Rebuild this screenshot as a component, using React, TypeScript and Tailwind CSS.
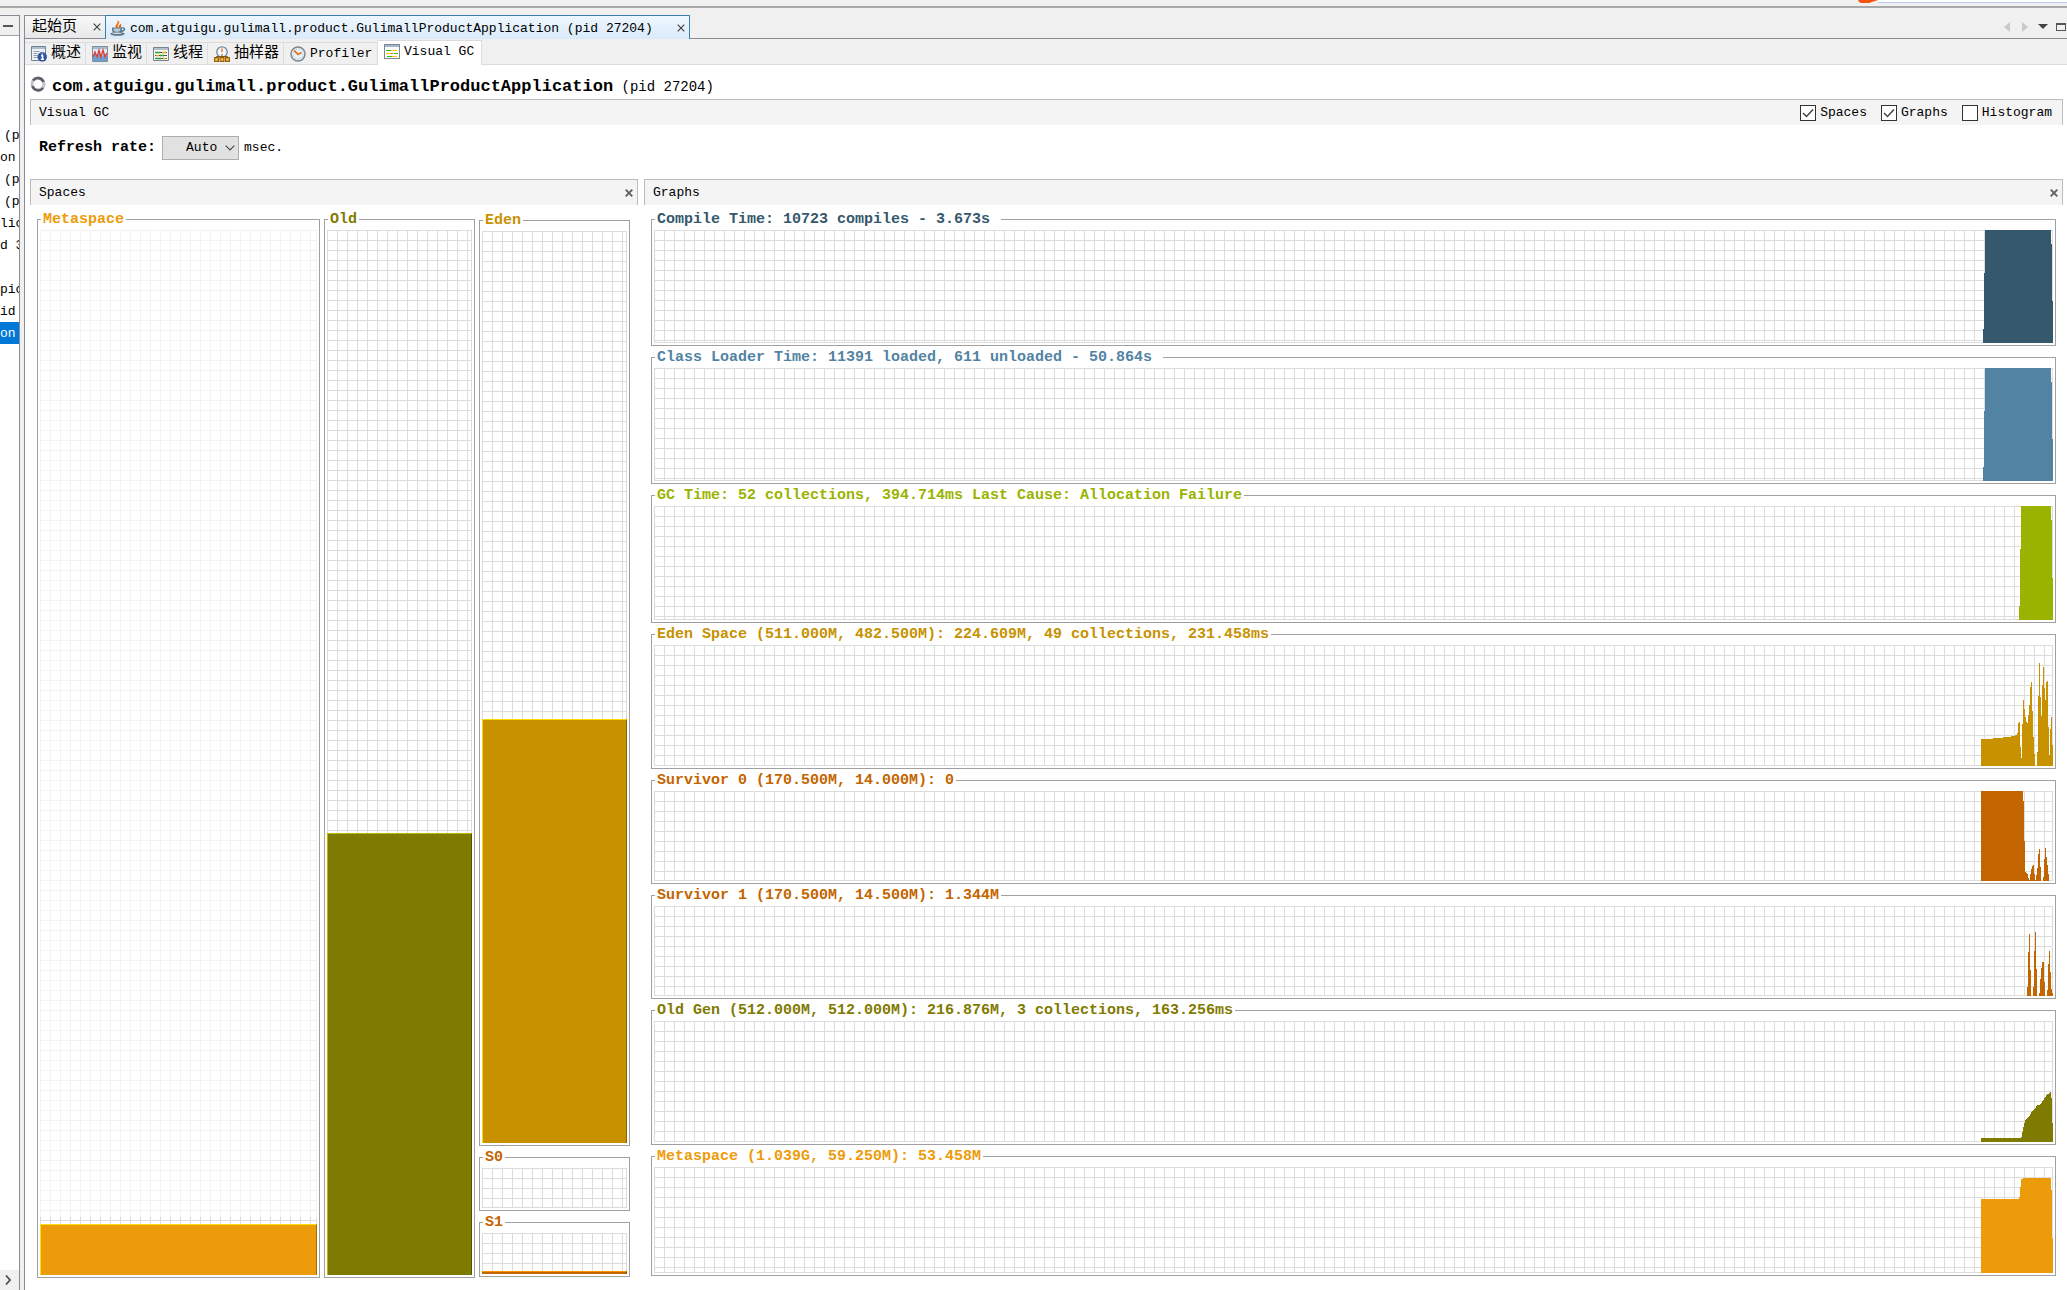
import React from "react";

type Run = [number, number];

const GRID =
  "bg-[linear-gradient(to_right,#dcdcdc_1px,transparent_1px),linear-gradient(to_bottom,#dcdcdc_1px,transparent_1px)] bg-[size:10px_10px] border-r border-b border-[#dcdcdc]";
const LIGHT_GRID =
  "bg-[linear-gradient(to_right,#f2f2f2_1px,transparent_1px),linear-gradient(to_bottom,#f2f2f2_1px,transparent_1px)] bg-[size:10px_10px] border-r border-[#f2f2f2]";

const CHART_WIDTH = 72;

function toPath(runs: Run[], height: number) {
  return runs
    .map(([x, h], i) => {
      const end = i + 1 < runs.length ? runs[i + 1][0] : CHART_WIDTH;
      return h > 0 ? `M${x} ${height}V${height - h}H${end}V${height}Z` : "";
    })
    .join("");
}

const columns = (start: number, heights: number[]): Run[] => heights.map((h, i) => [start + i, h]);

const loadRuns: Run[] = [[2, 14], [3, 70], [4, 113], [70, 99], [71, 42]];

const graphs: { title: string; color: string; height: number; runs: Run[] }[] = [
  { title: "Compile Time: 10723 compiles - 3.673s ", color: "text-[#35586c]", height: 113, runs: loadRuns },
  { title: "Class Loader Time: 11391 loaded, 611 unloaded - 50.864s ", color: "text-[#5283a2]", height: 113, runs: loadRuns },
  {
    title: "GC Time: 52 collections, 394.714ms Last Cause: Allocation Failure",
    color: "text-[#9ab300]", height: 113,
    runs: [[38, 14], [39, 70], [40, 113], [70, 99], [71, 42]],
  },
  {
    title: "Eden Space (511.000M, 482.500M): 224.609M, 49 collections, 231.458ms",
    color: "text-[#c79100]", height: 121,
    runs: [
      [0, 27], [12, 28], [22, 29], [30, 30], [34, 31],
      ...columns(36, [33, 43, 44, 19, 8, 42, 66, 57, 49, 44, 43, 51, 61, 79, 84, 55, 29, 12, 0, 0, 14, 70, 103, 69, 50, 81, 99, 78, 66, 84, 85, 39, 11, 37, 49, 21]),
    ],
  },
  {
    title: "Survivor 0 (170.500M, 14.000M): 0",
    color: "text-[#c36500]", height: 90,
    runs: [[0, 90], ...columns(42, [80, 40, 9, 8, 7, 3, 1, 7, 12, 15, 16, 7, 1, 6, 13, 27, 32, 14, 0, 0, 4, 22, 33, 24, 16, 7, 0])],
  },
  {
    title: "Survivor 1 (170.500M, 14.500M): 1.344M",
    color: "text-[#c36500]", height: 90,
    runs: columns(46, [9, 44, 62, 26, 0, 0, 9, 45, 64, 27, 0, 0, 3, 17, 28, 34, 34, 14, 0, 0, 6, 32, 45, 24, 7, 3]),
  },
  {
    title: "Old Gen (512.000M, 512.000M): 216.876M, 3 collections, 163.256ms",
    color: "text-[#7f7a00]", height: 121,
    runs: [[0, 4], ...columns(40, [5, 10, 15, 19, 22, 23, 24, 25, 26, 28, 30, 31, 32, 33, 34, 36, 37, 37, 37, 38, 39, 41, 42, 44, 45, 47, 48, 48, 49, 50, 44, 19])],
  },
  {
    title: "Metaspace (1.039G, 59.250M): 53.458M",
    color: "text-[#ec9c0a]", height: 106,
    runs: [[0, 74], [38, 76], [39, 86], [40, 94], [42, 95], [70, 83], [71, 35]],
  },
];

function Group({ title, className, children }: { title: string; className: string; children: React.ReactNode }) {
  return (
    <fieldset className={`min-h-0 min-w-0 border border-[#a0a0a0] px-[2px] pb-[2px] ${className}`}>
      <legend className="ml-px h-[22px] whitespace-pre px-[2px] text-[15px] font-bold leading-6">{title}</legend>
      {children}
    </fieldset>
  );
}

function Graph({ title, color, height, runs }: (typeof graphs)[number]) {
  return (
    <Group title={title} className={color}>
      <div className={`h-full ${GRID}`}>
        <svg
          className="relative left-px ml-auto block h-[calc(100%+1px)] w-[72px]"
          viewBox={`0 0 ${CHART_WIDTH} ${height}`}
          preserveAspectRatio="none"
          shapeRendering="crispEdges"
          role="img"
          aria-label={title.trim()}
        >
          <path d={toPath(runs, height)} fill="currentColor" />
        </svg>
      </div>
    </Group>
  );
}

function PanelHeader({ title }: { title: string }) {
  return (
    <div className="flex h-[26px] items-center justify-between border-x border-t border-[#bcbcbc] bg-[#f4f4f4] pl-2 pr-[3px]">
      <h2>{title}</h2>
      <button aria-label={`Close ${title}`} className="p-px">
        <CloseIcon className="h-2 w-2 text-[#606060]" bold />
      </button>
    </div>
  );
}

function CloseIcon({ className, bold }: { className: string; bold?: boolean }) {
  return (
    <svg viewBox="0 0 8 8" className={className} aria-hidden="true">
      <path d="M.7.7l6.6 6.6M7.3.7L.7 7.3" stroke="currentColor" strokeWidth={bold ? 1.9 : 1.2} />
    </svg>
  );
}

function JavaIcon() {
  return (
    <svg viewBox="0 0 16 16" className="h-4 w-4 shrink-0">
      <path d="M6.500 8C3 5 9 4 7.500 0c4.500 2.500-1 4.500 1 8z" fill="#f07c1c" />
      <path d="M9 8c-1-2 .5-3.500 2.500-4.500-1 2 .500 3-1 4.500z" fill="#e86a10" />
      <path d="M2 7.500h10v2c0 3-2 4-5 4s-5-1-5-4z" fill="#5f7d92" />
      <path d="M3.500 8.500h7c0 2-1 3.500-3.500 3.500s-3.500-1.500-3.500-3.500z" fill="#b9cbd6" />
      <path d="M12 8c3.500-1 3.500 3-1 3.500" fill="none" stroke="#4e6b80" strokeWidth="1.300" />
      <ellipse cx="7.500" cy="13.800" rx="7.300" ry="2" fill="#5f7888" />
      <ellipse cx="7" cy="13.300" rx="4.800" ry=".8" fill="#cfdbe2" />
    </svg>
  );
}

function OverviewIcon() {
  return (
    <svg viewBox="0 0 16 16" className="h-4 w-4 shrink-0">
      <path d="M.5.5h14v14H.5z" fill="#eef2f6" stroke="#6f8596" />
      <path d="M1 1h13v2H1z" fill="#a9bccb" />
      <path d="M2.500 5.500h6M2.500 7.500h4M2.500 9.500h4M2.500 11.500h4" stroke="#8fa3b3" />
      <circle cx="11.200" cy="10.800" r="4.400" fill="#2f57a8" stroke="#1f3f80" strokeWidth=".6" />
      <path d="M10 9.800h1.600v3.200M9.800 13.200h3.200M11.200 7.500v1.300" stroke="#fff" strokeWidth="1.400" fill="none" />
    </svg>
  );
}

function MonitorIcon() {
  return (
    <svg viewBox="0 0 16 16" className="h-4 w-4 shrink-0">
      <path d="M.5.5h15v15H.5z" fill="#dfe9f2" stroke="#7d8f9d" />
      <path d="M1 1h14v2H1z" fill="#a9bccb" />
      <path d="M1 15V10l2-3 2 5 2-6 3 5 2-4 3 3v5z" fill="#6f9fd0" />
      <path d="M1 11l2-5 2 5 2-7 2 7 2-7 2 7 2-4" fill="none" stroke="#e03a30" strokeWidth="1.300" />
    </svg>
  );
}

function ThreadsIcon() {
  return (
    <svg viewBox="0 0 16 16" className="h-4 w-4 shrink-0">
      <path d="M.5 1.500h15v13H.5z" fill="#f4f6f7" stroke="#74858f" />
      <path d="M1 2h14v2H1z" fill="#b3c0ca" />
      <path d="M2 6.500h12M2 9.500h12M2 12.500h12" stroke="#46525a" />
      <path d="M2 6.500h5M7 9.500h4M3 12.500h5" stroke="#2fa52f" strokeWidth="1.500" />
      <path d="M9 6.500h4M3 9.500h3M10 12.500h3" stroke="#f0a818" strokeWidth="1.500" />
    </svg>
  );
}

function SamplerIcon() {
  return (
    <svg viewBox="0 0 16 16" className="h-4 w-4 shrink-0">
      <circle cx="8" cy="6" r="5.200" fill="#f3f7fa" stroke="#72899a" strokeWidth="1.300" />
      <path d="M8 2.500V6" stroke="#e06a20" strokeWidth="1.300" />
      <path d="M2.500 12.500v-2h11v2M8 8v4" fill="none" stroke="#8a5a10" />
      <path d="M.6 11.600h3.800v3.800H.6zM6.100 11.600h3.800v3.800H6.100zM11.600 11.600h3.800v3.800h-3.800z" fill="#f4c050" stroke="#96620c" strokeWidth="1.200" />
    </svg>
  );
}

function ProfilerIcon() {
  return (
    <svg viewBox="0 0 16 16" className="h-4 w-4 shrink-0">
      <circle cx="8" cy="8" r="7" fill="#eaf2f8" stroke="#7b8790" strokeWidth="1.500" />
      <circle cx="8" cy="8" r="5" fill="none" stroke="#9fb8ca" strokeWidth="1" strokeDasharray="1 1.600" />
      <path d="M4 4.500L8 8.500 11.500 6.500" fill="none" stroke="#e8742c" strokeWidth="1.800" />
    </svg>
  );
}

function VisualGcIcon() {
  return (
    <svg viewBox="0 0 16 16" className="h-4 w-4 shrink-0" shapeRendering="crispEdges">
      <path d="M.5.5h15v14H.5z" fill="#fbfbfb" stroke="#808890" />
      <path d="M1 1h14v2H1z" fill="#a3b4cf" />
      <path d="M2 6.500h5M10 9.500h4M3 12.500h5" stroke="#20c020" strokeWidth="1.500" />
      <path d="M7 6.500h6M2 9.500h5M8 12.500h5" stroke="#f8c800" strokeWidth="1.500" />
      <path d="M7 9.500h2" stroke="#e05020" strokeWidth="1.500" />
    </svg>
  );
}

const innerTabs = [
  { label: "概述", icon: <OverviewIcon />, cjk: true, width: "w-[61px]" },
  { label: "监视", icon: <MonitorIcon />, cjk: true, width: "w-[61px]" },
  { label: "线程", icon: <ThreadsIcon />, cjk: true, width: "w-[61px]" },
  { label: "抽样器", icon: <SamplerIcon />, cjk: true, width: "w-[76px]" },
  { label: "Profiler", icon: <ProfilerIcon />, cjk: false, width: "w-[94px]" },
];

const treeRows = [
  { text: "(p", pad: "pl-1" },
  { text: "on", pad: "" },
  { text: "(p", pad: "pl-1" },
  { text: "(p", pad: "pl-1" },
  { text: "lic", pad: "" },
  { text: "d 3", pad: "" },
  { text: "", pad: "" },
  { text: "pic", pad: "" },
  { text: "id", pad: "" },
  { text: "on", pad: "", selected: true },
];

function Option({ label, checked }: { label: string; checked?: boolean }) {
  return (
    <label className="flex items-center gap-1">
      <span className="relative block h-4 w-4">
        <input type="checkbox" defaultChecked={checked} className="peer block h-4 w-4 appearance-none border border-[#333] bg-white" />
        <svg viewBox="0 0 16 16" className="pointer-events-none absolute inset-0 hidden peer-checked:block" aria-hidden="true">
          <path d="M3 8l3.500 3.500L13 4.500" fill="none" stroke="#444" strokeWidth="1.500" />
        </svg>
      </span>
      {label}
    </label>
  );
}

export default function App() {
  return (
    <div className="flex h-screen min-h-[700px] flex-col overflow-hidden bg-[#f0f0f0] font-['Liberation_Mono','Noto_Sans_CJK_SC',monospace] text-[13px] leading-5 text-black">
      <div className="flex h-2 shrink-0 justify-end border-b-2 border-[#a8a8a8]">
        <svg viewBox="0 0 20 3" className="h-[3px] w-5">
          <path d="M0 0h20l-3 1-6 2H3Q1 3 0 0z" fill="#f9500f" />
        </svg>
        <div className="h-[3px] w-[189px] border-b border-[#b8cbe8] bg-white" />
      </div>

      <div className="flex min-h-0 flex-1 pt-[7px]">
        <aside className="flex w-5 shrink-0 flex-col overflow-hidden border-r border-t border-[#8b8b95] bg-white">
          <button aria-label="Minimize" className="flex h-5 shrink-0 items-center justify-center border-b border-[#a0a0a0] bg-[#f0f0f0] pr-[3px]">
            <span className="h-[2px] w-[10px] bg-[#555]" />
          </button>
          <ul className="flex-1 pt-[88px]">
            {treeRows.map((row, i) => (
              <li key={i} className={`h-[22px] whitespace-pre leading-6 ${row.pad} ${row.selected ? "bg-[#0078d7] text-white" : ""}`}>
                {row.text}
              </li>
            ))}
          </ul>
          <button aria-label="Scroll right" className="flex h-5 shrink-0 items-center justify-center bg-[#f0f0f0] pr-[3px]">
            <svg viewBox="0 0 6 10" className="h-[10px] w-[6px]">
              <path d="M1 .5L5 5 1 9.500" fill="none" stroke="#505050" strokeWidth="1.800" />
            </svg>
          </button>
        </aside>

        <main className="ml-1 flex min-w-0 flex-1 flex-col border-l border-[#8b8b95] bg-white">
          <div className="flex h-6 shrink-0 bg-[#f0f0f0]">
            <div className="flex w-20 items-center justify-between border-b border-t border-[#8b8b95] bg-linear-to-b from-[#f8f8f8] to-[#e8e8e8] pl-[7px] pr-1">
              <button className="pt-[2px] text-[15px]">起始页</button>
              <button aria-label="Close 起始页"><CloseIcon className="h-2 w-2 text-[#444]" /></button>
            </div>
            <div className="flex w-[585px] items-center gap-1 border-x border-t border-[#3a80ad] bg-linear-to-b from-[#eff7ff] to-[#d9eafa] px-1">
              <JavaIcon />
              <button className="flex-1 whitespace-pre pt-[2px] text-left">com.atguigu.gulimall.product.GulimallProductApplication (pid 27204)</button>
              <button aria-label="Close application"><CloseIcon className="h-2 w-2 text-[#444]" /></button>
            </div>
            <div className="flex flex-1 items-center justify-end gap-2 border-b border-[#8b8b95] pr-px">
              <button aria-label="Previous" className="mr-1"><svg viewBox="0 0 6 10" className="h-[10px] w-[6px]"><path d="M6 0v10L0 5z" fill="#c8c8c8" /></svg></button>
              <button aria-label="Next" className="mr-[2px]"><svg viewBox="0 0 6 10" className="h-[10px] w-[6px]"><path d="M0 0v10l6-5z" fill="#c8c8c8" /></svg></button>
              <button aria-label="Tab list"><svg viewBox="0 0 10 5" className="h-[5px] w-[10px]"><path d="M0 0h10L5 5z" fill="#444" /></svg></button>
              <button aria-label="Maximize" className="h-2 w-[10px] border border-t-2 border-[#555]" />
            </div>
          </div>

          <nav className="flex h-[26px] shrink-0 items-end border-b border-[#dcdcdc] bg-[#f0f0f0]">
            {innerTabs.map((tab) => (
              <button key={tab.label} className={`flex h-[22px] items-center gap-1 whitespace-nowrap border-r border-t border-[#dcdcdc] pl-[6px] pt-px ${tab.width}`}>
                {tab.icon}
                <span className={tab.cjk ? "text-[15px]" : ""}>{tab.label}</span>
              </button>
            ))}
            <button className="-mb-px flex h-[25px] w-[104px] items-center gap-1 whitespace-nowrap border-r border-t border-[#dcdcdc] bg-white pb-[2px] pl-[6px]">
              <VisualGcIcon />
              Visual GC
            </button>
          </nav>

          <div className="flex min-h-0 flex-1 flex-col pb-3 pl-[5px] pr-1">
            <header className="flex h-[34px] shrink-0 items-center gap-[6px]">
              <svg viewBox="0 0 16 16" className="mt-1 h-4 w-4">
                <circle cx="8" cy="8" r="6" fill="none" stroke="#c4c4c8" strokeWidth="3" />
                <path d="M3 4.500A6 6 0 0 1 13.500 6M13 12A6 6 0 0 1 2.500 10" fill="none" stroke="#5e5e6c" strokeWidth="2.600" />
              </svg>
              <h1 className="whitespace-nowrap pt-[10px] text-[17px] font-bold">
                com.atguigu.gulimall.product.GulimallProductApplication<span className="text-[14px] font-normal"> (pid 27204)</span>
              </h1>
            </header>

            <div className="flex h-[26px] shrink-0 items-center justify-between border-x border-t border-[#bcbcbc] bg-[#f4f4f4] pl-2 pr-[10px]">
              <h2>Visual GC</h2>
              <div className="flex gap-[14px]">
                <Option label="Spaces" checked />
                <Option label="Graphs" checked />
                <Option label="Histogram" />
              </div>
            </div>

            <div className="flex h-[54px] shrink-0 items-center pb-2 pl-[9px]">
              <label htmlFor="rate" className="mr-[6px] text-[15px] font-bold">Refresh rate:</label>
              <div className="relative mr-[5px]">
                <select id="rate" className="block h-6 w-[77px] appearance-none border border-[#adadad] bg-[#e1e1e1] pl-[23px]">
                  <option>Auto</option>
                </select>
                <svg viewBox="0 0 10 6" className="pointer-events-none absolute right-1 top-[9px] h-[6px] w-[10px]">
                  <path d="M.7.700L5 5 9.300.7" fill="none" stroke="#444" strokeWidth="1.100" />
                </svg>
              </div>
              <span>msec.</span>
            </div>

            <div className="grid min-h-0 flex-1 grid-cols-[608fr_1419fr] gap-[6px]">
              <section className="flex min-h-0 min-w-0 flex-col">
                <PanelHeader title="Spaces" />
                <div className="grid min-h-0 flex-1 grid-cols-[283fr_151fr_151fr] gap-1 pl-[7px] pr-2 pt-[3px]">
                  <Group title="Metaspace" className="text-[#ec9c0a]">
                    <div className="grid h-full grid-rows-[987fr_7fr_51fr]">
                      <div className={LIGHT_GRID} />
                      <div className={`border-b-0! bg-[position:0_3px]! ${GRID}`} />
                      <div className="border-x border-t border-l-[#ffe000] border-r-[#a86c00] border-t-[#ffe000] bg-[#ec9c0a]" />
                    </div>
                  </Group>
                  <Group title="Old" className="text-[#7f7a00]">
                    <div className="grid h-full grid-rows-[603fr_442fr]">
                      <div className={`border-b-0! ${GRID}`} />
                      <div className="border-x border-t border-l-[#bdb800] border-r-[#555200] border-t-[#bdb800] bg-[#7f7a00]" />
                    </div>
                  </Group>
                  <div className="grid min-h-0 min-w-0 grid-rows-[937fr_65fr_66fr] py-px">
                    <Group title="Eden" className="text-[#c79100]">
                      <div className="grid h-full grid-rows-[488fr_424fr]">
                        <div className={`border-b-0! ${GRID}`} />
                        <div className="border-x border-t border-l-[#ffd800] border-r-[#8b6500] border-t-[#ffd800] bg-[#c79100]" />
                      </div>
                    </Group>
                    <Group title="S0" className="text-[#c36500]">
                      <div className={`h-full ${GRID}`} />
                    </Group>
                    <Group title="S1" className="text-[#c36500]">
                      <div className="flex h-full flex-col">
                        <div className={`flex-1 border-b-0! ${GRID}`} />
                        <div className="h-[3px] border-r border-t border-r-[#884400] border-t-[#ff9000] bg-[#c36500]" />
                      </div>
                    </Group>
                  </div>
                </div>
              </section>

              <section className="flex min-h-0 min-w-0 flex-col">
                <PanelHeader title="Graphs" />
                <div className="grid min-h-0 flex-1 grid-rows-[138fr_138fr_139fr_146fr_115fr_115fr_146fr_131fr] px-[7px] pb-[2px] pt-[3px]">
                  {graphs.map((g) => (
                    <Graph key={g.title} {...g} />
                  ))}
                </div>
              </section>
            </div>
          </div>
        </main>
      </div>
    </div>
  );
}
